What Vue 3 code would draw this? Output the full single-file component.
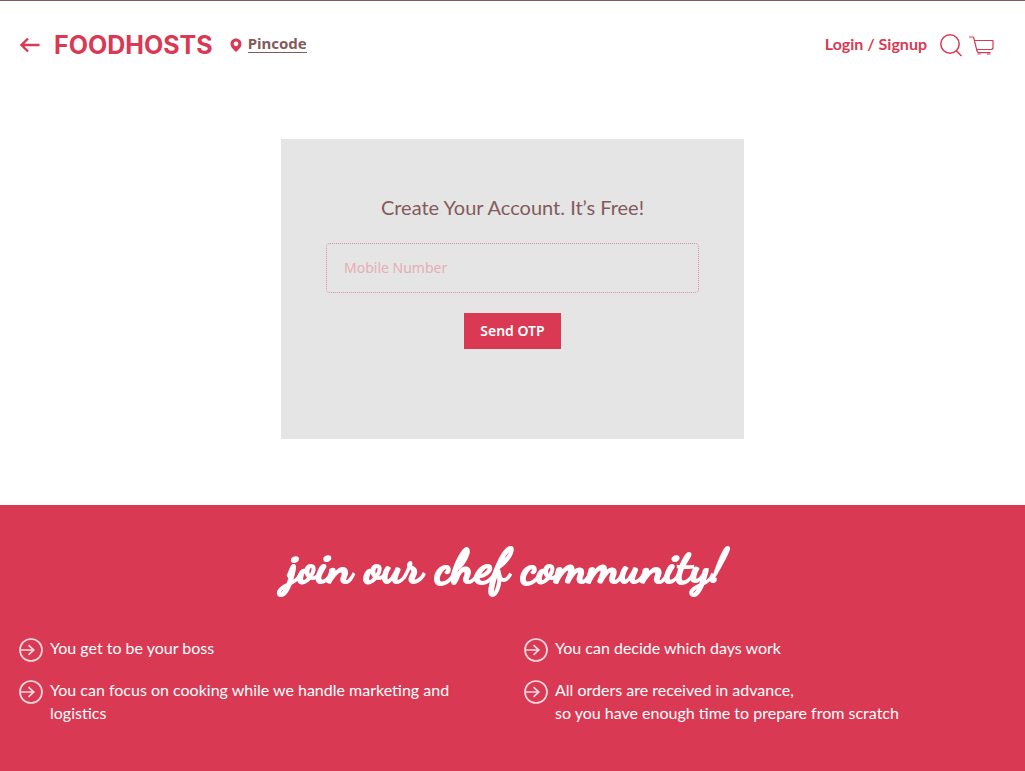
<script setup>
import { ref } from 'vue'

const mobile = ref('')
const benefits = [
  'You get to be your boss',
  'You can decide which days work',
  'You can focus on cooking while we handle marketing and logistics',
  'All orders are received in advance,\nso you have enough time to prepare from scratch',
]
</script>

<template>
  <div class="page">
    <header class="header">
      <button class="icon-button back" type="button" aria-label="Back">
        <svg width="20" height="16" viewBox="0 0 20 16">
          <path d="M19.500 8H2M8 1.500L1.500 8L8 14.500" fill="none" stroke="currentColor" stroke-width="2.400" />
        </svg>
      </button>
      <a class="brand" href="#">FOODHOSTS</a>
      <svg class="pin" width="12" height="15" viewBox="0 0 12 15" aria-hidden="true">
        <path fill="currentColor" fill-rule="evenodd" d="M6 .5C2.900.5.5 2.900.5 5.900C.5 9 3 11 6 14C9 11 11.500 9 11.500 5.900C11.500 2.900 9.100.5 6 .5ZM6 3.400A2.400 2.400 0 1 1 6 8.200A2.400 2.400 0 1 1 6 3.400Z" />
      </svg>
      <a class="pincode" href="#">Pincode</a>
      <nav class="actions">
        <a class="login" href="#">Login / Signup</a>
        <button class="icon-button" type="button" aria-label="Search">
          <svg width="24" height="24" viewBox="0 0 24 24" fill="none" stroke="currentColor" stroke-width="1.500">
            <circle cx="11" cy="11" r="9.200" />
            <path d="M17 17.500L22.500 23" />
          </svg>
        </button>
        <button class="icon-button cart" type="button" aria-label="Cart">
          <svg width="26" height="22" viewBox="0 0 26 22" fill="none" stroke="currentColor" stroke-width="1.200" stroke-linejoin="round">
            <path d="M1 3H4.500Q5.500 3 5.800 4L9 17Q9.400 18.600 11 18.600H22.500" />
            <path d="M6 6.500H25V13.500Q25 15.500 23 15.500H8.600" />
            <path d="M9.500 20H12.500M19 20H22.500" />
          </svg>
        </button>
      </nav>
    </header>

    <main class="main">
      <form class="card" @submit.prevent>
        <h1 class="title">Create Your Account. It’s Free!</h1>
        <input v-model="mobile" class="field" type="tel" placeholder="Mobile Number" aria-label="Mobile Number" />
        <button class="submit" type="submit">Send OTP</button>
      </form>
    </main>

    <section class="community">
      <h2 class="slogan">join our chef community!</h2>
      <ul class="benefits">
        <li v-for="item in benefits" :key="item" class="benefit">
          <svg class="bullet" width="24" height="24" viewBox="0 0 24 24" fill="none" stroke="currentColor" stroke-width="1.700" aria-hidden="true">
            <circle cx="12" cy="12" r="11" />
            <path d="M1 12H15M9.500 7.200L14.800 12L9.500 16.800" />
          </svg>
          <span>{{ item }}</span>
        </li>
      </ul>
    </section>
  </div>
</template>

<style>
body {
  background: #fff;
}
</style>

<style scoped>
.page {
  display: flex;
  flex-direction: column;
  min-height: 100vh;
  box-sizing: border-box;
  border-top: 1px solid #845a5c;
  color: #da3953;
  font-family: Lato, "Liberation Sans", sans-serif;
}
a {
  color: inherit;
  text-decoration: none;
}
.header {
  display: flex;
  align-items: center;
  height: 88px;
  padding: 0 31px 0 20px;
}
.icon-button {
  display: flex;
  padding: 0;
  border: 0;
  background: none;
  color: inherit;
}
.brand {
  margin-left: 14px;
  font: 700 25px/32px Inter, sans-serif;
}
.pin {
  margin-left: 17px;
}
.pincode {
  margin: 0 0 2px 6px;
  border-bottom: 1px solid #845a5c;
  color: #845a5c;
  font: 700 15px/17px "Noto Sans", sans-serif;
}
.actions {
  display: flex;
  align-items: center;
  margin-left: auto;
}
.login {
  margin: 0 12px 2px 0;
  font-size: 16px;
  line-height: 24px;
  font-weight: 700;
}
.cart {
  margin-left: 5px;
}
.main {
  padding: 50px 16px 66px;
}
.card {
  display: flex;
  flex-direction: column;
  align-items: center;
  box-sizing: border-box;
  max-width: 463px;
  min-height: 300px;
  margin: 0 auto;
  padding: 54px 45px;
  background: #e5e5e5;
}
.title {
  margin: 0;
  color: #845a5c;
  font-size: 20px;
  line-height: 28px;
  font-weight: 400;
}
.field {
  box-sizing: border-box;
  width: 100%;
  height: 50px;
  margin: 22px 0 20px;
  padding: 0 17px 2px;
  border: 1px dotted #e58c9b;
  border-radius: 4px;
  outline: 0;
  background: transparent;
  color: #845a5c;
  font: 400 14px/20px "Noto Sans", sans-serif;
}
.field::placeholder {
  color: #e5adb6;
  opacity: 1;
}
.submit {
  height: 36px;
  padding: 0 16px;
  border: 0;
  background: #da3953;
  color: #fff;
  font: 600 14px/20px "Noto Sans", sans-serif;
}
.community {
  flex: 1;
  padding: 26px 19px 46px;
  background: #da3953;
  color: #fff;
}
.slogan {
  margin: 0 0 33px;
  padding-right: 12px;
  font: 700 49px/72px "Dancing Script", cursive;
  text-align: center;
  -webkit-text-stroke: 2px currentColor;
}
.benefits {
  display: grid;
  grid-template-columns: 1fr 1fr;
  gap: 16px 23px;
  margin: 0;
  padding: 0;
  list-style: none;
}
.benefit {
  display: flex;
  gap: 7px;
  font-size: 16px;
  line-height: 23px;
  white-space: pre-line;
}
.bullet {
  flex: none;
  margin-top: 2px;
  color: #f6d9de;
}
</style>
